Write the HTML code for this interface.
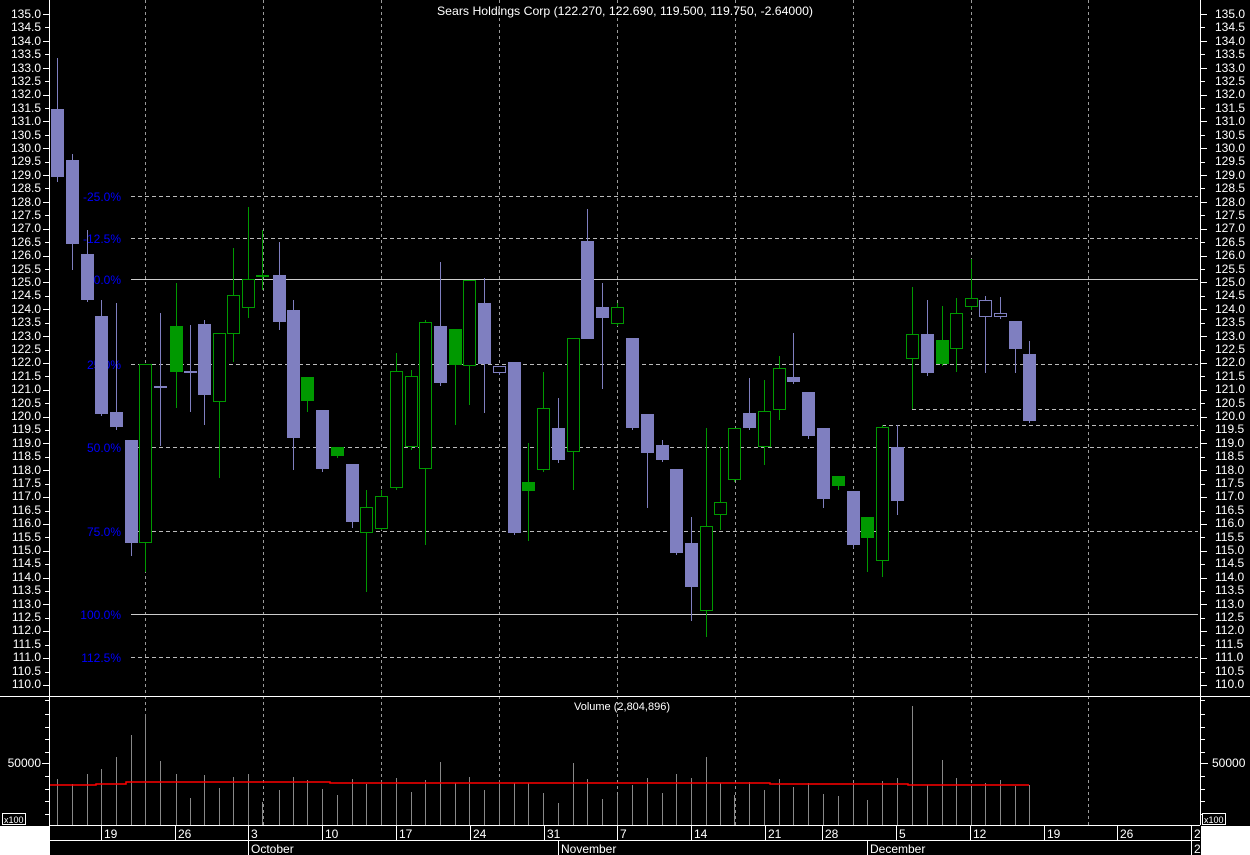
<!DOCTYPE html>
<html><head><meta charset="utf-8"><style>
html,body{margin:0;padding:0;background:#000;}
svg{display:block;font-family:"Liberation Sans",sans-serif;}
</style></head><body>
<svg id="s" width="1250" height="855" xmlns="http://www.w3.org/2000/svg">
<rect width="1250" height="855" fill="#000"/>
<g id="grid" stroke="#9a9a9a" stroke-dasharray="3,3" stroke-width="1">
<line x1="145.5" y1="0" x2="145.5" y2="825"/>
<line x1="263.5" y1="0" x2="263.5" y2="825"/>
<line x1="381.5" y1="0" x2="381.5" y2="825"/>
<line x1="499.5" y1="0" x2="499.5" y2="825"/>
<line x1="617.5" y1="0" x2="617.5" y2="825"/>
<line x1="735.5" y1="0" x2="735.5" y2="825"/>
<line x1="853.5" y1="0" x2="853.5" y2="825"/>
<line x1="971.5" y1="0" x2="971.5" y2="825"/>
<line x1="1088.5" y1="0" x2="1088.5" y2="825"/>
</g>
<g stroke="#bbb" stroke-dasharray="4,3">
<line x1="131" y1="196.5" x2="1198" y2="196.5"/>
<line x1="131" y1="238.5" x2="1198" y2="238.5"/>
<line x1="131" y1="364.5" x2="1198" y2="364.5"/>
<line x1="131" y1="447.5" x2="1198" y2="447.5"/>
<line x1="131" y1="531.5" x2="1198" y2="531.5"/>
<line x1="131" y1="657.5" x2="1198" y2="657.5"/>
<line x1="912" y1="409.5" x2="1198" y2="409.5"/>
<line x1="882" y1="425.5" x2="1198" y2="425.5"/>
</g>
<g stroke="#ccc">
<line x1="131" y1="279.5" x2="1198" y2="279.5"/>
<line x1="131" y1="614.5" x2="1198" y2="614.5"/>
</g>
<g fill="#0000ff" font-size="12" text-anchor="end">
<text x="121" y="201">-25.0%</text>
<text x="121" y="243">-12.5%</text>
<text x="121" y="284">0.0%</text>
<text x="121" y="369">25.0%</text>
<text x="121" y="452">50.0%</text>
<text x="121" y="536">75.0%</text>
<text x="121" y="619">100.0%</text>
<text x="121" y="662">112.5%</text>
</g>
<g id="candles"></g>
<g id="vol"></g>
<text x="625" y="15" fill="#fff" font-size="12" text-anchor="middle" textLength="376" lengthAdjust="spacingAndGlyphs">Sears Holdings Corp (122.270, 122.690, 119.500, 119.750, -2.64000)</text>
<text x="622" y="710" fill="#fff" font-size="11" text-anchor="middle">Volume (2,804,896)</text>
<g stroke="#fff">
<line x1="49.5" y1="0" x2="49.5" y2="855"/>
<line x1="1200.5" y1="0" x2="1200.5" y2="825"/>
<line x1="0" y1="696.5" x2="1250" y2="696.5"/>
<line x1="50" y1="825.5" x2="1200" y2="825.5"/>
<line x1="50" y1="840.5" x2="1200" y2="840.5"/>
</g>
<g id="ticks" stroke="#fff"></g>
<g fill="#fff" font-size="12" text-anchor="end" id="la">
<text x="41" y="18">135.0</text><text x="41" y="31">134.5</text><text x="41" y="45">134.0</text><text x="41" y="58">133.5</text><text x="41" y="72">133.0</text><text x="41" y="85">132.5</text><text x="41" y="98">132.0</text><text x="41" y="112">131.5</text><text x="41" y="125">131.0</text><text x="41" y="139">130.5</text><text x="41" y="152">130.0</text><text x="41" y="165">129.5</text><text x="41" y="179">129.0</text><text x="41" y="192">128.5</text><text x="41" y="206">128.0</text><text x="41" y="219">127.5</text><text x="41" y="232">127.0</text><text x="41" y="246">126.5</text><text x="41" y="259">126.0</text><text x="41" y="273">125.5</text><text x="41" y="286">125.0</text><text x="41" y="299">124.5</text><text x="41" y="313">124.0</text><text x="41" y="326">123.5</text><text x="41" y="340">123.0</text><text x="41" y="353">122.5</text><text x="41" y="366">122.0</text><text x="41" y="380">121.5</text><text x="41" y="393">121.0</text><text x="41" y="407">120.5</text><text x="41" y="420">120.0</text><text x="41" y="433">119.5</text><text x="41" y="447">119.0</text><text x="41" y="460">118.5</text><text x="41" y="474">118.0</text><text x="41" y="487">117.5</text><text x="41" y="500">117.0</text><text x="41" y="514">116.5</text><text x="41" y="527">116.0</text><text x="41" y="541">115.5</text><text x="41" y="554">115.0</text><text x="41" y="567">114.5</text><text x="41" y="581">114.0</text><text x="41" y="594">113.5</text><text x="41" y="608">113.0</text><text x="41" y="621">112.5</text><text x="41" y="634">112.0</text><text x="41" y="648">111.5</text><text x="41" y="661">111.0</text><text x="41" y="675">110.5</text><text x="41" y="688">110.0</text>
<text x="41" y="767">50000</text>
</g>
<g fill="#fff" font-size="12" text-anchor="start">
<text x="1215" y="18">135.0</text><text x="1215" y="31">134.5</text><text x="1215" y="45">134.0</text><text x="1215" y="58">133.5</text><text x="1215" y="72">133.0</text><text x="1215" y="85">132.5</text><text x="1215" y="98">132.0</text><text x="1215" y="112">131.5</text><text x="1215" y="125">131.0</text><text x="1215" y="139">130.5</text><text x="1215" y="152">130.0</text><text x="1215" y="165">129.5</text><text x="1215" y="179">129.0</text><text x="1215" y="192">128.5</text><text x="1215" y="206">128.0</text><text x="1215" y="219">127.5</text><text x="1215" y="232">127.0</text><text x="1215" y="246">126.5</text><text x="1215" y="259">126.0</text><text x="1215" y="273">125.5</text><text x="1215" y="286">125.0</text><text x="1215" y="299">124.5</text><text x="1215" y="313">124.0</text><text x="1215" y="326">123.5</text><text x="1215" y="340">123.0</text><text x="1215" y="353">122.5</text><text x="1215" y="366">122.0</text><text x="1215" y="380">121.5</text><text x="1215" y="393">121.0</text><text x="1215" y="407">120.5</text><text x="1215" y="420">120.0</text><text x="1215" y="433">119.5</text><text x="1215" y="447">119.0</text><text x="1215" y="460">118.5</text><text x="1215" y="474">118.0</text><text x="1215" y="487">117.5</text><text x="1215" y="500">117.0</text><text x="1215" y="514">116.5</text><text x="1215" y="527">116.0</text><text x="1215" y="541">115.5</text><text x="1215" y="554">115.0</text><text x="1215" y="567">114.5</text><text x="1215" y="581">114.0</text><text x="1215" y="594">113.5</text><text x="1215" y="608">113.0</text><text x="1215" y="621">112.5</text><text x="1215" y="634">112.0</text><text x="1215" y="648">111.5</text><text x="1215" y="661">111.0</text><text x="1215" y="675">110.5</text><text x="1215" y="688">110.0</text>
<text x="1212" y="767">50000</text>
</g>
<rect x="2.5" y="813.5" width="23" height="11" fill="#000" stroke="#fff"/>
<text x="4" y="823" fill="#fff" font-size="9">x100</text>
<rect x="1202.5" y="813.5" width="23" height="11" fill="#000" stroke="#fff"/>
<text x="1204" y="823" fill="#fff" font-size="9">x100</text>
<rect x="0" y="826" width="49" height="29" fill="#fff"/>
<rect x="1201" y="826" width="49" height="29" fill="#fff"/>
<g stroke="#fff">
<line x1="101.5" y1="826" x2="101.5" y2="840"/><line x1="175.5" y1="826" x2="175.5" y2="840"/><line x1="248.5" y1="826" x2="248.5" y2="855"/><line x1="322.5" y1="826" x2="322.5" y2="840"/><line x1="396.5" y1="826" x2="396.5" y2="840"/><line x1="470.5" y1="826" x2="470.5" y2="840"/><line x1="544.5" y1="826" x2="544.5" y2="840"/><line x1="558.5" y1="840" x2="558.5" y2="855"/><line x1="617.5" y1="826" x2="617.5" y2="840"/><line x1="691.5" y1="826" x2="691.5" y2="840"/><line x1="765.5" y1="826" x2="765.5" y2="840"/><line x1="822.5" y1="826" x2="822.5" y2="840"/><line x1="867.5" y1="840" x2="867.5" y2="855"/><line x1="896.5" y1="826" x2="896.5" y2="840"/><line x1="970.5" y1="826" x2="970.5" y2="840"/><line x1="1044.5" y1="826" x2="1044.5" y2="840"/><line x1="1117.5" y1="826" x2="1117.5" y2="840"/><line x1="1191.5" y1="826" x2="1191.5" y2="855"/>
</g>
<g fill="#fff" font-size="12">
<text x="104" y="838">19</text><text x="178" y="838">26</text><text x="251" y="838">3</text><text x="325" y="838">10</text><text x="399" y="838">17</text><text x="473" y="838">24</text><text x="547" y="838">31</text><text x="620" y="838">7</text><text x="694" y="838">14</text><text x="768" y="838">21</text><text x="825" y="838">28</text><text x="899" y="838">5</text><text x="973" y="838">12</text><text x="1047" y="838">19</text><text x="1120" y="838">26</text><text x="1194" y="838">2</text>
<text x="251" y="853">October</text><text x="561" y="853">November</text><text x="870" y="853">December</text><text x="1194" y="853">2</text>
</g>
</svg>
<script>
var NS="http://www.w3.org/2000/svg";
function el(p,t,a){var e=document.createElementNS(NS,t);for(var k in a)e.setAttribute(k,a[k]);p.appendChild(e);return e;}
var P="#7f7fc0",G="#009900";
var C=[[57,109,177,58,182,'p'],[72,160,244,154,270,'p'],[87,254,300,230,302,'p'],[101,316,414,300,416,'p'],[116,412,427,303,430,'p'],[131,440,543,440,556,'p'],[145,364,543,364,572,'o'],[160,386,388,313,446,'h'],[176,326,372,283,408,'g'],[190,371,373,325,412,'h'],[204,324,395,320,425,'p'],[219,333,402,333,478,'o'],[233,295,334,248,362,'o'],[248,279,308,207,318,'o'],[262,275,277,230,290,'g'],[279,275,322,242,330,'p'],[293,310,438,300,470,'p'],[307,377,401,377,412,'g'],[322,410,469,410,472,'p'],[337,447,456,447,458,'g'],[352,464,522,464,528,'p'],[366,507,533,490,592,'o'],[381,496,529,490,530,'o'],[396,371,488,353,490,'o'],[411,376,447,370,450,'o'],[425,322,469,320,545,'o'],[440,326,383,262,386,'p'],[455,329,365,329,425,'g'],[469,280,366,280,405,'o'],[484,303,364,278,413,'p'],[499,366,373,366,375,'h'],[514,362,533,362,535,'p'],[528,482,491,443,541,'g'],[543,408,470,372,472,'o'],[558,428,460,398,463,'p'],[573,338,452,338,490,'o'],[587,241,339,209,339,'p'],[602,307,318,283,389,'p'],[617,307,324,303,326,'o'],[632,338,428,338,430,'p'],[647,414,453,414,508,'p'],[662,445,460,440,462,'p'],[676,469,553,469,555,'p'],[691,543,587,517,621,'p'],[706,526,611,428,637,'o'],[720,502,515,447,530,'o'],[734,428,480,428,482,'o'],[749,413,428,378,430,'p'],[764,411,447,380,465,'o'],[779,368,410,356,420,'o'],[793,377,382,333,384,'p'],[808,392,436,392,439,'p'],[823,428,499,428,508,'p'],[838,476,486,476,490,'g'],[853,491,545,491,548,'p'],[867,517,538,517,572,'g'],[882,427,561,425,577,'o'],[897,447,501,425,515,'p'],[912,334,359,287,409,'o'],[927,334,373,300,376,'p'],[942,340,364,306,366,'g'],[956,313,349,298,372,'o'],[971,298,307,259,310,'o'],[985,300,317,296,373,'h'],[1000,313,317,297,319,'h'],[1015,321,349,321,373,'p'],[1029,354,421,341,423,'p']];
var cg=document.getElementById('candles');
C.forEach(function(c){var x=c[0],t=c[5];var col=(t=='p'||t=='h')?P:G;
el(cg,'line',{x1:x+.5,x2:x+.5,y1:c[3],y2:c[4],stroke:col});
var h=Math.max(c[2]-c[1],1);
if(t=='p'||t=='g')el(cg,'rect',{x:x-6,y:c[1],width:13,height:h,fill:col});
else el(cg,'rect',{x:x-5.5,y:c[1]+.5,width:12,height:Math.max(h-1,1),fill:'#000',stroke:col});
});
var V=[779,784,774,769,757,735,714,761,774,798,775,788,777,774,802,790,777,780,789,795,779,784,781,778,792,780,762,783,777,790,780,783,783,793,803,763,779,799,795,785,778,793,774,778,757,783,795,782,790,779,787,783,794,796,784,800,781,778,706,785,760,778,788,783,780,786,785];
var vg=document.getElementById('vol');
C.forEach(function(c,i){el(vg,'line',{x1:c[0]+.5,x2:c[0]+.5,y1:V[i],y2:825,stroke:'#888'});});
el(vg,'polyline',{points:'50,785 96,785 96,784 126,784 126,782 330,782 330,783 770,783 770,784 908,784 908,785 1029,785',fill:'none',stroke:'#ff0000','stroke-width':1.5});
var tg=document.getElementById('ticks');
for(var i=0;i<=50;i++){var y=14+i*13.42;var l=(i%2==0)?6:4;
el(tg,'line',{x1:49-l,x2:49,y1:Math.round(y)+.5,y2:Math.round(y)+.5});
el(tg,'line',{x1:1201,x2:1201+l,y1:Math.round(y)+.5,y2:Math.round(y)+.5});}
[700,714,727,739,752,763,776,789,801,814].forEach(function(y){var l=y==763?7:4;
el(tg,'line',{x1:49-l,x2:49,y1:y+.5,y2:y+.5});el(tg,'line',{x1:1201,x2:1201+l,y1:y+.5,y2:y+.5});});
</script>
</body></html>
